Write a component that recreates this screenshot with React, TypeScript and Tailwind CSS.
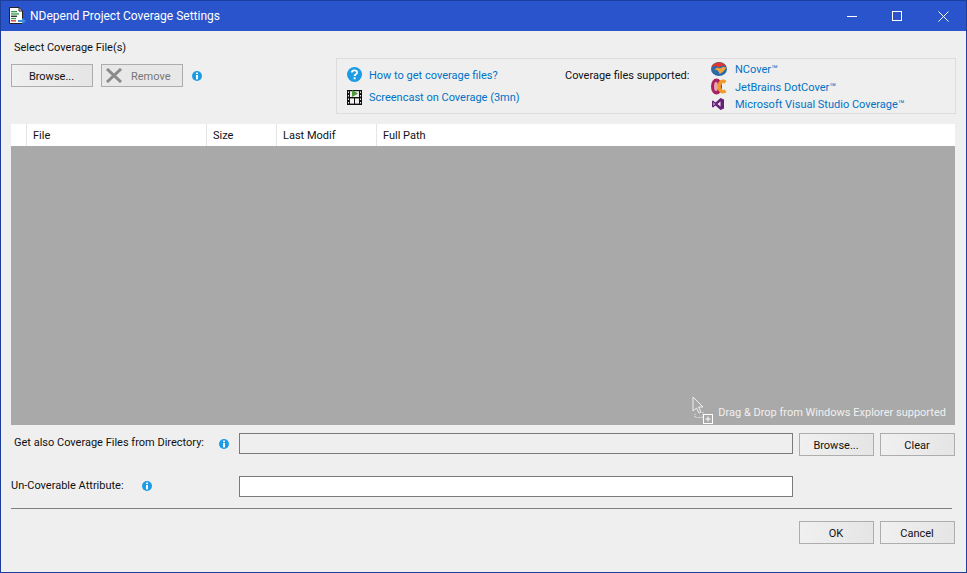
const font = "[font-family:Roboto,sans-serif]";

function Info() {
  return (
    <svg width="10" height="10" viewBox="0 0 10 10" className="shrink-0">
      <circle cx="5" cy="5" r="5" fill="#1c9be6" />
      <rect x="4" y="1.6" width="2" height="1.5" fill="#fff" />
      <rect x="4" y="4" width="2" height="4.4" fill="#fff" />
    </svg>
  );
}

function Btn({ children, w = "w-[75px]" }: { children: React.ReactNode; w?: string }) {
  return (
    <div className={`${w} h-[23px] flex items-center justify-center pt-[2px] pr-[1px] border border-[#adadad] bg-gradient-to-r from-[#f0f0f0] to-[#e5e5e5] text-[#111]`}>
      {children}
    </div>
  );
}

function AppIcon() {
  return (
    <svg width="17" height="18" viewBox="0 0 17 18" className="shrink-0">
      <path d="M0.500 0.500H10L13.500 4V16.500H0.500Z" fill="#fff" stroke="#222" strokeWidth="1" />
      <path d="M10 0.500V4H13.500" fill="none" stroke="#222" />
      <rect x="2" y="4" width="6" height="1.300" fill="#2f9e44" />
      <rect x="2" y="6.300" width="8" height="1.300" fill="#2f9e44" />
      <rect x="2" y="8.600" width="6" height="1.300" fill="#222" />
      <rect x="2" y="10.900" width="5" height="1.300" fill="#2f9e44" />
      <rect x="2" y="13.200" width="5" height="1.300" fill="#d0312d" />
      <path d="M9 13H13V11L17 14L13 17V15H9Z" fill="#3b8fdc" />
    </svg>
  );
}

function Film() {
  return (
    <svg width="15" height="16" viewBox="0 0 15 16" className="shrink-0">
      <rect x="0" y="1" width="3" height="15" fill="#111" />
      <rect x="12" y="1" width="3" height="15" fill="#111" />
      <rect x="3" y="8" width="9" height="1.400" fill="#111" />
      <rect x="3" y="14.600" width="9" height="1.400" fill="#111" />
      <rect x="3" y="1" width="9" height="1.200" fill="#111" />
      <rect x="7" y="9" width="1" height="6" fill="#111" />
      <path d="M5 1L11 4.500L5 8Z" fill="#4f9a3c" />
      <g fill="#efefef">
        <rect x="1" y="2.500" width="1" height="1.500" />
        <rect x="1" y="6" width="1" height="1.500" />
        <rect x="1" y="9.500" width="1" height="1.500" />
        <rect x="1" y="13" width="1" height="1.500" />
        <rect x="13" y="2.500" width="1" height="1.500" />
        <rect x="13" y="6" width="1" height="1.500" />
        <rect x="13" y="9.500" width="1" height="1.500" />
        <rect x="13" y="13" width="1" height="1.500" />
      </g>
    </svg>
  );
}

function Help() {
  return (
    <svg width="15" height="15" viewBox="0 0 15 15" className="shrink-0">
      <circle cx="7.500" cy="7.500" r="7.500" fill="#1c9be6" />
      <path d="M4.900 5.600C4.900 2.700 10.200 2.700 10.200 5.500C10.200 7.300 7.600 7.300 7.600 9" fill="none" stroke="#fff" strokeWidth="1.900" />
      <rect x="6.600" y="10.300" width="2" height="2" fill="#fff" />
    </svg>
  );
}

function NCover() {
  return (
    <svg width="16" height="14" viewBox="0 0 16 14" className="shrink-0">
      <ellipse cx="8" cy="7" rx="8" ry="7" fill="#2c69a8" />
      <path d="M0.500 5C2 0 12 -1.500 15.500 4.500C12 2.500 10 4 8 5.500C5.500 3.500 3 3.500 0.500 5Z" fill="#e5352b" />
      <path d="M3 7.500C6 5 8 5.500 9 6.500C10.500 5 12.500 4.500 15.500 5.500C14 8 11.500 10.500 8.500 12C8.500 9.500 6 7.500 3 7.500Z" fill="#f3a43a" />
    </svg>
  );
}

function DotCover() {
  return (
    <svg width="16" height="17" viewBox="0 0 16 17" className="shrink-0">
      <ellipse cx="5.500" cy="8.500" rx="5.500" ry="8" fill="#a8235f" />
      <ellipse cx="5" cy="8.500" rx="2" ry="4.500" fill="#e9a4b8" />
      <path d="M15.500 3C11 -0.500 6.500 3 6.500 8.500C6.500 14 11 17.500 15.500 14L13.500 11.500C11.500 13 9.800 11.300 9.800 8.500C9.800 5.700 11.500 4 13.500 5.500Z" fill="#f09a2a" />
    </svg>
  );
}

function VS() {
  return (
    <svg width="12" height="12" viewBox="0 0 12 12" className="shrink-0">
      <path d="M8.500 0L12 1.500V10.500L8.500 12L3.500 7.500L1 9.500L0 9V3L1 2.500L3.500 4.500ZM8.500 3.500L5.500 6L8.500 8.500ZM1.500 4.500V7.500L3 6Z" fill="#68217a" fillRule="evenodd" />
    </svg>
  );
}

function HeaderCell({ w, label }: { w: string; label?: string }) {
  return (
    <div className={`${w} h-full flex items-center pl-[6px] pt-[2px] border-r border-[#e5e5e5] text-[#111]`}>{label}</div>
  );
}

function DragCursor() {
  return (
    <svg width="24" height="28" viewBox="0 0 24 28" className="shrink-0">
      <path d="M2 1V15L5.500 12L8 17L10 16L7.500 11H12Z" fill="#a9a9a9" stroke="#eee" strokeWidth="1" />
      <path d="M4 18V21.500H12V15" fill="none" stroke="#eee" strokeDasharray="1 1" />
      <rect x="12.500" y="18.500" width="9" height="9" fill="#a9a9a9" stroke="#fff" />
      <path d="M14.500 23H19.500M17 20.500V25.500" stroke="#fff" />
    </svg>
  );
}

export default function App() {
  return (
    <div className={`w-[967px] h-[573px] flex flex-col bg-[#efefef] border-x border-b border-[#1c3f9e] text-[11px] leading-[14px] overflow-hidden ${font}`}>
      <div className="h-[31px] shrink-0 flex items-center bg-[#2a54cb] border-t border-[#1c3f9e] text-white text-[12px]">
        <div className="ml-[8px] mr-[4px]"><AppIcon /></div>
        <span>NDepend Project Coverage Settings</span>
        <div className="ml-auto flex items-center">
          <svg width="10" height="11" viewBox="0 0 10 11" className="mr-[35px]"><path d="M0 5.500H10" stroke="#fff" strokeWidth="1" /></svg>
          <svg width="10" height="10" viewBox="0 0 10 10" className="mr-[36px]"><rect x="0.500" y="0.500" width="9" height="9" fill="none" stroke="#fff" /></svg>
          <svg width="11" height="11" viewBox="0 0 11 11" className="mr-[17px]"><path d="M0.500 0.500L10.500 10.500M10.500 0.500L0.500 10.500" stroke="#fff" strokeWidth="1" /></svg>
        </div>
      </div>

      <div className="flex-1 flex flex-col px-[10px]">
        <div className="h-[93px] shrink-0 flex justify-between">
          <div className="flex flex-col">
            <div className="mt-[10px] ml-[3px] h-[14px] text-[#111]">Select Coverage File(s)</div>
            <div className="mt-[9px] flex items-center">
              <Btn w="w-[82px]">Browse...</Btn>
              <div className="ml-[8px] w-[82px] h-[23px] flex items-center pt-[2px] border border-[#adadad] bg-[#e8e8e8] text-[#777]">
                <svg width="18" height="15" viewBox="0 0 18 15" className="ml-[3px] -mt-[2px]">
                  <path d="M2 1L16 14M16 1L2 14" stroke="#8a8a8a" strokeWidth="3" />
                </svg>
                <span className="ml-[8px]">Remove</span>
              </div>
              <div className="ml-[9px]"><Info /></div>
            </div>
          </div>
          <div className="mt-[27px] mb-[10px] w-[620px] border border-[#dcdcdc] flex text-[#0072c6]">
            <div className="w-[228px] pl-[10px] pt-[8px] flex flex-col gap-[7px]">
              <div className="h-[15px] flex items-center gap-[7px]"><Help /><span className="pt-[2px]">How to get coverage files?</span></div>
              <div className="h-[15px] flex items-center gap-[7px]"><Film /><span className="pt-[2px]">Screencast on Coverage (3mn)</span></div>
            </div>
            <div className="w-[146px] pt-[9px] text-[#111] h-[15px] leading-[15px] box-content">Coverage files supported:</div>
            <div className="flex flex-col pt-[1px]">
              <div className="h-[18px] flex items-center"><div className="w-[24px] flex justify-start"><NCover /></div><span className="pt-[2px]">NCover™</span></div>
              <div className="h-[18px] flex items-center"><div className="w-[24px] flex justify-start"><DotCover /></div><span className="pt-[2px]">JetBrains DotCover™</span></div>
              <div className="h-[18px] flex items-center"><div className="w-[24px] pl-[1px] flex justify-start"><VS /></div><span className="pt-[2px]">Microsoft Visual Studio Coverage™</span></div>
            </div>
          </div>
        </div>

        <div className="w-[944px] h-[301px] shrink-0 flex flex-col">
          <div className="h-[22px] shrink-0 flex items-center bg-white">
            <HeaderCell w="w-[16px]" />
            <HeaderCell w="w-[180px]" label="File" />
            <HeaderCell w="w-[70px]" label="Size" />
            <HeaderCell w="w-[100px]" label="Last Modif" />
            <div className="pl-[6px] pt-[2px] text-[#111]">Full Path</div>
          </div>
          <div className="flex-1 bg-[#a9a9a9] flex items-end justify-end pb-[1px] pr-[9px] text-[#f0f0f0]">
            <DragCursor />
            <span className="mb-[4px] ml-[3px]">Drag &amp; Drop from Windows Explorer supported</span>
          </div>
        </div>

        <div className="mt-[8px] h-[23px] shrink-0 flex items-start">
          <div className="w-[208px] pl-[3px] pt-[3px] text-[#111]">Get also Coverage Files from Directory:</div>
          <div className="w-[20px] pt-[6px]"><Info /></div>
          <div className="w-[554px] h-[21px] border border-[#7a7a7a] bg-[#efefef]"></div>
          <div className="ml-[6px]"><Btn>Browse...</Btn></div>
          <div className="ml-[6px]"><Btn>Clear</Btn></div>
        </div>

        <div className="mt-[19px] h-[23px] shrink-0 flex items-center">
          <div className="w-[131px] pb-[1px] text-[#111]">Un-Coverable Attribute:</div>
          <div className="w-[97px] pb-[2px]"><Info /></div>
          <div className="w-[554px] h-[21px] border border-[#7a7a7a] bg-white"></div>
        </div>

        <div className="mt-[10px] w-[941px] h-px shrink-0 bg-[#7f7f7f]"></div>

        <div className="mt-[12px] w-[944px] flex justify-end gap-[6px]">
          <Btn>OK</Btn>
          <Btn>Cancel</Btn>
        </div>
      </div>
    </div>
  );
}
